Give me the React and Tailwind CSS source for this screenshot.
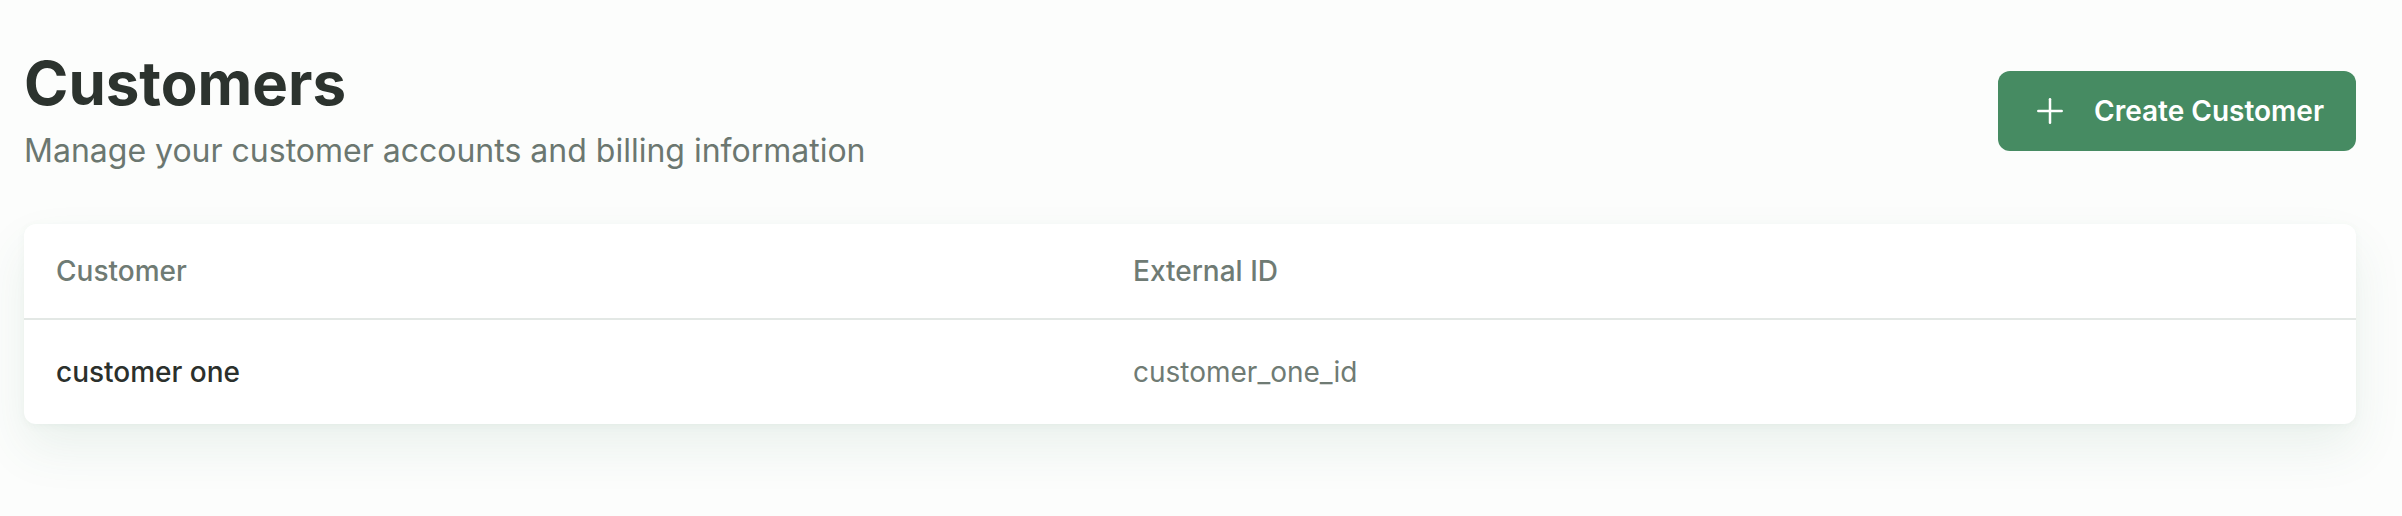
import { Plus } from 'lucide-react'

const rows = [{ name: 'customer one', externalId: 'customer_one_id' }]

export default function App() {
  return (
    <div className="min-h-screen bg-[#fcfdfc] pl-[24px] pr-[46px] pt-[47px]" style={{ fontFamily: 'Inter, "Noto Sans", sans-serif' }}>
      <div className="flex items-center justify-between">
        <div>
          <h1 className="text-[60px] leading-[72px] font-bold text-[#2c332e]">Customers</h1>
          <p className="mt-[8px] text-[32px] leading-[48px] text-[#6b7770]">Manage your customer accounts and billing information</p>
        </div>
        <button className="flex h-[80px] items-center gap-[24px] rounded-[12px] bg-[#468b62] px-[32px] text-[28px] font-semibold text-white">
          <Plus className="h-[40px] w-[40px]" strokeWidth={1.5} />
          Create Customer
        </button>
      </div>

      <div className="mt-[49px] overflow-hidden rounded-[12px] bg-white shadow-[0_24px_50px_rgba(60,120,85,0.09),0_2px_8px_rgba(60,120,85,0.05)]">
        <div className="grid grid-cols-[1077px_1fr] h-[96px] items-center border-b-2 border-[#e3e8e5] text-[28px] font-medium text-[#6f7b74]">
          <div className="px-[32px]">Customer</div>
          <div className="px-[32px]">External ID</div>
        </div>
        {rows.map(r => (
          <div key={r.externalId} className="grid grid-cols-[1077px_1fr] h-[104px] items-center text-[28px]">
            <div className="px-[32px] font-medium text-[#2b302c]">{r.name}</div>
            <div className="px-[32px] text-[#6f7b74]">{r.externalId}</div>
          </div>
        ))}
      </div>
    </div>
  )
}
